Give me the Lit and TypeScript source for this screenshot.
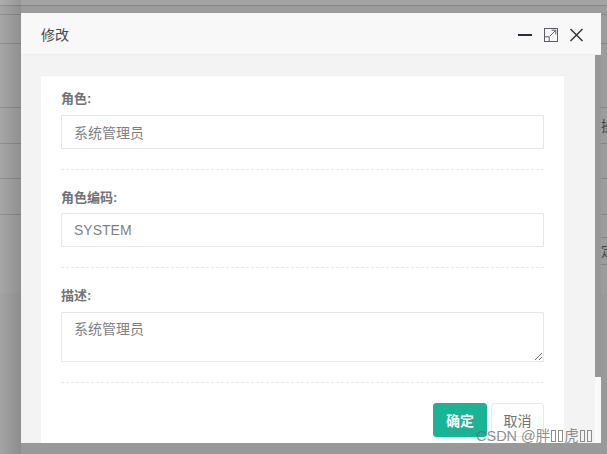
import { LitElement, html, css } from "lit";
import { customElement } from "lit/decorators.js";

@customElement("app-root")
export class AppRoot extends LitElement {
  static styles = css`
    :host { display: block; width: 607px; height: 454px; }
    * { box-sizing: border-box; }
    .page {
      position: relative; width: 607px; height: 454px; overflow: hidden;
      font-family: "Liberation Sans", "Noto Sans CJK SC", sans-serif;
      background: #999;
    }
    .backdrop { display: flex; flex-direction: column; height: 293px; background: #9c9c9c; }
    .rule { border-bottom: 1px solid #858585; flex: none; }
    .r1 { height: 6px; background: #a4a4a4; } .r2 { height: 9px; } .r3 { height: 29px; }
    .r4 { height: 64px; } .r5 { height: 36px; } .r6 { height: 35px; } .r7 { height: 36px; }
    .shade {
      position: absolute; inset: 0;
      background: linear-gradient(90deg, rgba(255,255,255,.1) 0, rgba(0,0,0,.08) 21px, rgba(0,0,0,0) 21px);
    }
    .edge { position: absolute; left: 601px; top: 0; width: 6px; height: 293px; overflow: hidden; color: #444; font-size: 14px; }
    .edge span { position: absolute; left: 0; }
    .edge .rl { position: absolute; left: 0; width: 6px; height: 1px; background: #858585; }
    .modal {
      position: absolute; left: 21px; top: 13px; width: 580px; height: 430px;
      display: flex; flex-direction: column; background: #f9f9f9;
    }
    .head {
      flex: none; height: 42px; padding: 0 16px 0 20px;
      display: flex; align-items: center; justify-content: space-between;
      background: #f8f8f8; border-bottom: 1px solid #eeeeee;
      font-size: 14px; color: #4a4a4a;
    }
    .tools { display: flex; align-items: center; gap: 10px; padding-top: 3px; }
    .tools svg { display: block; }
    .main { flex: 1; min-height: 0; display: flex; }
    .scroll { flex: none; width: 574px; height: 388px; padding: 20px 31px 0 20px; background: #f3f3f3; overflow: hidden; }
    .bar { flex: none; width: 6px; height: 322px; background: #979797; }
    .card { background: #fff; border-top: 1px solid #eeeeee; padding: 0 20px; height: 400px; }
    .group { border-bottom: 1px dashed #e7eaec; padding: 19px 0 20px; }
    .group.first { padding-top: 14px; }
    label { display: block; font-size: 13px; line-height: 18px; font-weight: 700; color: #707274; margin-bottom: 6px; }
    .first label, .tall label { margin-bottom: 7px; }
    input, textarea {
      display: block; width: 100%; height: 34px; padding: 6px 12px; margin: 0;
      border: 1px solid #e5e6e7; border-radius: 1px; background: #fff;
      font: 14px/20px "Liberation Sans", "Noto Sans CJK SC", sans-serif; color: #7f7f7f; outline: none;
    }
    textarea { height: 50px; }
    .actions { display: flex; justify-content: flex-end; gap: 4px; padding-top: 20px; }
    button {
      height: 34px; border-radius: 3px; font: 14px "Liberation Sans", "Noto Sans CJK SC", sans-serif; padding: 0;
      border: 1px solid #e7eaec; background: #fff; color: #707274; width: 53px;
    }
    button.primary { width: 54px; background: #1ab394; border-color: #1ab394; color: #fff; font-weight: 700; }
    .mark {
      position: absolute; left: 476px; top: 427px; white-space: nowrap;
      font-size: 14.5px; line-height: 18px; color: rgba(105,105,105,.75);
    }
    .tofu {
      display: inline-block; width: 5px; height: 12px; margin: 0 1px 0 1px;
      border: 1px solid rgba(105,105,105,.75); vertical-align: -1px;
    }
  `;

  render() {
    return html`
      <div class="page">
        <div class="backdrop">
          <div class="rule r1"></div><div class="rule r2"></div><div class="rule r3"></div>
          <div class="rule r4"></div><div class="rule r5"></div><div class="rule r6"></div><div class="rule r7"></div>
        </div>
        <div class="shade"></div>
        <div class="edge">
          <span style="top:115px">操</span><span style="top:240px">定</span>
          <div class="rl" style="top:237px"></div><div class="rl" style="top:264px"></div>
        </div>
        <div class="modal">
          <div class="head">
            <span>修改</span>
            <div class="tools">
              <svg width="16" height="16" viewBox="0 0 16 16"><path d="M1 8h14" stroke="#2b2d3a" stroke-width="2"/></svg>
              <svg width="16" height="16" viewBox="0 0 16 16" fill="none" stroke="#5a5c66" stroke-width="1"><rect x="1.5" y="1.5" width="13" height="13"/><rect x="1.5" y="9.8" width="4.7" height="4.7"/><path d="M7 9l5.6-5.6M8.6 3.2h4.2v4.2"/></svg>
              <svg width="16" height="16" viewBox="0 0 16 16" fill="none" stroke="#33353f" stroke-width="1.5"><path d="M1.5 2l12 12M13.5 2l-12 12"/></svg>
            </div>
          </div>
          <div class="main">
            <div class="scroll">
              <div class="card">
                <div class="group first"><label>角色:</label><input value="系统管理员" /></div>
                <div class="group"><label>角色编码:</label><input value="SYSTEM" /></div>
                <div class="group tall"><label>描述:</label><textarea>系统管理员</textarea></div>
                <div class="actions"><button class="primary">确定</button><button>取消</button></div>
              </div>
            </div>
            <div class="bar"></div>
          </div>
        </div>
        <div class="mark">CSDN @胖<span class="tofu"></span><span class="tofu"></span>虎<span class="tofu"></span><span class="tofu"></span></div>
      </div>
    `;
  }
}
